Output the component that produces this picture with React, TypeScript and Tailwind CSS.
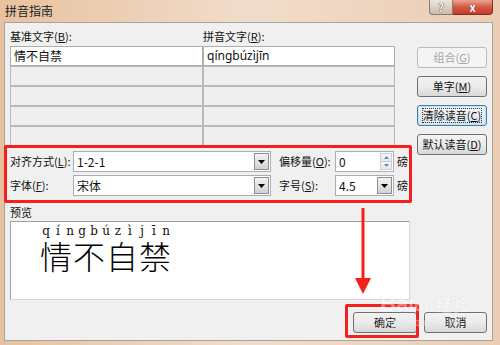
import React from "react";

const ui = "font-['Noto_Sans_CJK_SC','Noto_Sans',sans-serif]";

const U = ({ c }: { c: string }) => <span className="underline underline-offset-1">{c}</span>;

const DownArrow = () => (
  <svg width="7" height="4" viewBox="0 0 7 4">
    <path d="M0 0 H7 L3.5 4 Z" fill="#000" />
  </svg>
);

const Combo = ({ value, w }: { value: string; w: string }) => (
  <div className={`flex h-[21px] shrink-0 ${w} border border-[#abadb3] bg-white`}>
    <div className="flex-1 pl-[3px] text-[12px] leading-[19px]">{value}</div>
    <div className="m-px flex w-[15px] items-center justify-center border border-[#8e8f8f] bg-linear-to-b from-[#f3f3f3] to-[#d2d2d2]">
      <DownArrow />
    </div>
  </div>
);

const Btn = ({
  children,
  kind = "normal",
  w = "w-[70px]",
}: {
  children: React.ReactNode;
  kind?: "normal" | "disabled" | "focus";
  w?: string;
}) => {
  const base = "flex h-[21px] shrink-0 items-center justify-center rounded-[3px] border text-[11px]";
  if (kind === "disabled")
    return <div className={`${base} ${w} border-[#b8bcbe] bg-[#f4f4f4] text-[#a6a6a6]`}>{children}</div>;
  if (kind === "focus")
    return (
      <div className={`${base} ${w} border-[#3c7fb1] bg-linear-to-b from-[#f4f8fb] to-[#d9e4ec] shadow-[inset_0_0_0_1px_#c5e3f6]`}>
        <span className="border border-dotted border-[#333] leading-[13px]">{children}</span>
      </div>
    );
  return (
    <div className={`${base} ${w} border-[#707070] bg-linear-to-b from-[#f2f2f2] via-[#ebebeb] to-[#d8d8d8]`}>{children}</div>
  );
};

const pinyin = ["q", "í", "n", "g", "b", "ú", "z", "ì", "j", "ī", "n"];

export default function App() {
  return (
    <div className={`relative flex h-[345px] w-[500px] flex-col overflow-hidden whitespace-nowrap bg-linear-to-r from-[#e8c29f] via-[#f1dccb] to-[#ebcdb3] text-[#111] ${ui}`}>
      {/* title bar */}
      <div className="flex h-[22px] items-start">
        <div className="pl-[5px] pt-[3px] text-[12px] leading-[15px] text-[#222]">拼音指南</div>
        <div className="ml-auto mr-[7px] flex">
          <div className="flex h-[15px] w-[24px] items-center justify-center rounded-bl-[4px] border border-t-0 border-[#8a7b6e] bg-linear-to-b from-[#eee4da] to-[#c9bcb0] text-[11px] font-bold leading-none text-white [text-shadow:0_0_1px_#333,0_0_1px_#333]">
            ?
          </div>
          <div className="flex h-[15px] w-[40px] items-center justify-center rounded-br-[4px] border border-l-0 border-t-0 border-[#7d3127] bg-linear-to-b from-[#e7a494] via-[#d35a44] to-[#c33a2b] text-[11px] font-bold leading-none text-white [text-shadow:0_0_1px_#622]">
            x
          </div>
        </div>
      </div>

      {/* client */}
      <div className="mb-[4px] ml-[4px] mr-[7px] flex flex-1 flex-col border border-[#a9a39c] bg-[#f0f0f0] pl-[5px] pr-[5px] text-[11px]">
        <div className="flex h-[123px] shrink-0 items-start pt-[6px]">
          <div className="w-[385px]">
            <div className="flex h-[17px] leading-[15px]">
              <div className="w-[193px]">
                基准文字(<U c="B" />):
              </div>
              <div>
                拼音文字(<U c="R" />):
              </div>
            </div>
            <div className="grid grid-cols-[193px_192px] grid-rows-[20px_20px_20px_20px_20px] text-[12px]">
              <div className="border border-[#adadad] bg-white pl-[3px] leading-[18px]">情不自禁</div>
              <div className="border border-[#adadad] bg-white pl-[3px] font-['Noto_Sans',sans-serif] leading-[18px]">qíngbúzìjīn</div>
              {Array.from({ length: 8 }).map((_, i) => (
                <div key={i} className="border border-[#b9b9b9] bg-[#efefef]" />
              ))}
            </div>
          </div>
          <div className="relative z-10 ml-[22px] flex flex-col gap-[8px] pt-[18px]">
            <Btn kind="disabled">
              组合(<U c="G" />)
            </Btn>
            <Btn>
              单字(<U c="M" />)
            </Btn>
            <Btn kind="focus">
              清除读音(<U c="C" />)
            </Btn>
            <Btn>
              默认读音(<U c="D" />)
            </Btn>
          </div>
        </div>

        {/* options */}
        <div className="mt-[5px] flex flex-col gap-[3px]">
          <div className="flex items-center">
            <div className="w-[63px] shrink-0">
              对齐方式(<U c="L" />):
            </div>
            <Combo value="1-2-1" w="w-[198px]" />
            <div className="ml-[8px] w-[56px] shrink-0">
              偏移量(<U c="O" />):
            </div>
            <div className="flex h-[21px] w-[59px] shrink-0 border border-[#abadb3] bg-white">
              <div className="flex-1 pl-[3px] text-[12px] leading-[19px]">0</div>
              <div className="m-px flex w-[12px] flex-col">
                <div className="flex flex-1 items-center justify-center border border-[#c9cdd2] bg-linear-to-b from-[#f5f7f9] to-[#e3e8ee]">
                  <svg width="5" height="3" viewBox="0 0 5 3">
                    <path d="M0 3 H5 L2.5 0 Z" fill="#6b87a6" />
                  </svg>
                </div>
                <div className="flex flex-1 items-center justify-center border border-t-0 border-[#c9cdd2] bg-linear-to-b from-[#f5f7f9] to-[#e3e8ee]">
                  <svg width="5" height="3" viewBox="0 0 5 3">
                    <path d="M0 0 H5 L2.5 3 Z" fill="#6b87a6" />
                  </svg>
                </div>
              </div>
            </div>
            <div className="ml-[3px]">磅</div>
          </div>
          <div className="flex items-center">
            <div className="w-[63px] shrink-0">
              字体(<U c="F" />):
            </div>
            <Combo value="宋体" w="w-[198px]" />
            <div className="ml-[8px] w-[56px] shrink-0">
              字号(<U c="S" />):
            </div>
            <Combo value="4.5" w="w-[59px]" />
            <div className="ml-[3px]">磅</div>
          </div>
        </div>

        {/* preview */}
        <div className="mt-[9px] leading-[14px]">预览</div>
        <div className="mt-[2px] h-[79px] w-[400px] shrink-0 border border-[#a0a0a0] border-b-[#d5d5d5] border-r-[#d5d5d5] bg-white pl-[29px] pt-[3px]">
          <div className="flex font-['DejaVu_Serif','Liberation_Serif',serif] text-[12px] leading-[13px]">
            {pinyin.map((p, i) => (
              <span key={i} className="w-[12px] text-center">
                {p}
              </span>
            ))}
          </div>
          <div className="text-[32px] font-light leading-[34px] tracking-[1px] text-black">情不自禁</div>
        </div>

        {/* bottom buttons */}
        <div className="mt-[12px] flex justify-end gap-[7px]">
          <Btn w="w-[64px]">确定</Btn>
          <Btn w="w-[63px]">取消</Btn>
        </div>
      </div>

      {/* annotations */}
      <div className="pointer-events-none absolute left-[4px] top-[145px] h-[58px] w-[408px] rounded-[2px] border-[3px] border-[#f3201c]" />
      <div className="pointer-events-none absolute left-[345px] top-[304px] h-[34px] w-[74px] rounded-[2px] border-[3px] border-[#f3201c]" />
      <svg className="absolute left-[355px] top-[208px]" width="16" height="86" viewBox="0 0 16 86">
        <path d="M8 0 V74" stroke="#f3201c" strokeWidth="3" />
        <path d="M0 70 H16 L8 86 Z" fill="#f3201c" />
      </svg>

      {/* watermark */}
      <div className="pointer-events-none absolute left-[380px] top-[293px] flex flex-col items-start opacity-40">
        <div className="font-['Liberation_Sans',sans-serif] text-[22px] font-bold leading-[22px] text-white [text-shadow:0_0_1px_#bbb]">
          Bai<span className="text-[16px]">du</span>
          <span className={`ml-[2px] text-[16px] ${ui}`}>经验</span>
        </div>
        <div className="font-['Liberation_Sans',sans-serif] text-[10px] leading-[12px] text-white [text-shadow:0_0_1px_#aaa]">
          jingyan.baidu.com
        </div>
      </div>
    </div>
  );
}
